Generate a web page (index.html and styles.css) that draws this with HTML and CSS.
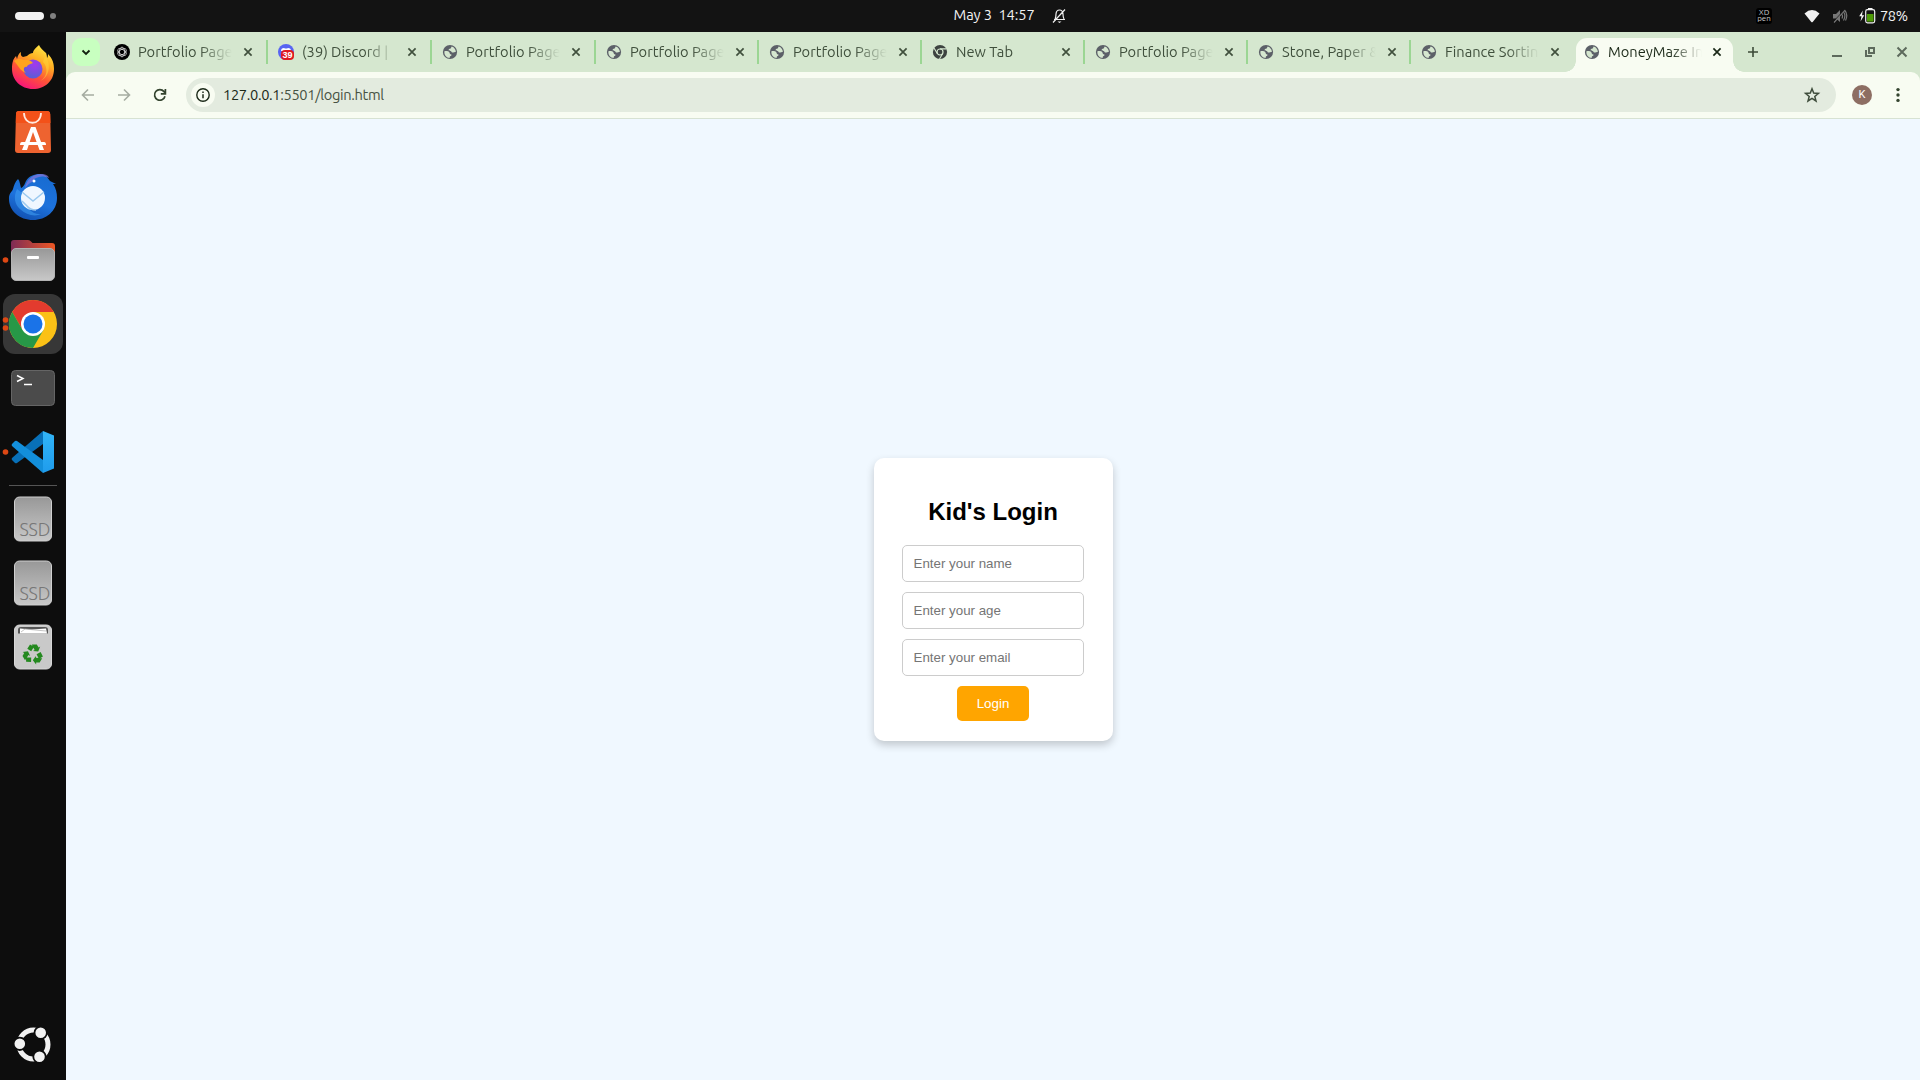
FILE: index.html
```html
<!DOCTYPE html>
<html lang="en">
<head>
<meta charset="utf-8">
<title>MoneyMaze</title>
<link rel="stylesheet" href="styles.css">
</head>
<body>
<svg width="0" height="0" class="defs">
  <defs>
    <linearGradient id="grey" x1="0" y1="0" x2="0" y2="1"><stop offset="0" stop-color="#989898"/><stop offset="1" stop-color="#c8c8c8"/></linearGradient>
    <linearGradient id="fox" x1=".8" y1="0" x2=".3" y2="1"><stop offset="0" stop-color="#fff04a"/><stop offset=".35" stop-color="#ffae22"/><stop offset=".65" stop-color="#ff5536"/><stop offset="1" stop-color="#f5127d"/></linearGradient>
    <radialGradient id="foxglobe" cx=".6" cy=".25" r=".8"><stop offset="0" stop-color="#a338ee"/><stop offset="1" stop-color="#5461d4"/></radialGradient>
    <linearGradient id="bird" x1=".8" y1="0" x2=".4" y2="1"><stop offset="0" stop-color="#176bd0"/><stop offset=".6" stop-color="#1d72dc"/><stop offset="1" stop-color="#1354b5"/></linearGradient>
    <linearGradient id="folder"><stop offset="0" stop-color="#7e2b56"/><stop offset="1" stop-color="#ed5724"/></linearGradient>
    <linearGradient id="code" x1="0" y1="0" x2="0" y2="1"><stop offset="0" stop-color="#32b5f8"/><stop offset="1" stop-color="#1f9cec"/></linearGradient>
  </defs>
  <symbol id="globe" viewBox="0 0 16 16">
    <circle cx="8" cy="8" r="7.1" fill="#5c6068"/>
    <path d="M2.400 7.200C4.500 7 6.200 7 7.300 8.200c.9 1 .1 1.900 1.300 2.100 1.400.2 1.200 1.200.1 1.700-.9.4-1 1-1 1.900C4.300 13.800 2 11 2.400 7.200z" fill="#d5e7cf"/>
    <path d="M9.800 2.400C8.800 3 9.500 3.800 8.600 4.500 7.400 4.900 6.400 5.100 6.700 6.200c.4.9 1.800.2 2.400 1 .5.8 1 1.700 2.100 1.300 1-.4 1.600-.8 2.600-.5C14 5.400 12.200 3.200 9.800 2.400z" fill="#d5e7cf"/>
  </symbol>
  <symbol id="close" viewBox="0 0 16 16"><path d="M4.400 4.400l7.200 7.200M11.600 4.400l-7.200 7.200" stroke="currentColor" stroke-width="1.7" fill="none"/></symbol>
</svg>

<header class="topbar">
  <div class="workspaces"><span class="pill"></span><span class="dot"></span></div>
  <div class="clock">
    <span class="date">May 3&nbsp; 14:57</span>
    <svg width="16" height="16" viewBox="0 0 16 16" fill="none" stroke="#f0f0f0" stroke-width="1.2"><path d="M3 11.500h11M4 11c1-1.200.8-3 1-5 .2-2.500 1.500-4 3.500-4S11.800 3.500 12 6c.1 2 0 3.500 1 5M2 14.500L14 1.500"/><path d="M6.500 13.500h4l-2 1.600z" fill="#f0f0f0" stroke="none"/></svg>
  </div>
  <div class="status">
    <span class="pen"><span>XD</span><span>pen</span></span>
    <svg class="wifi" width="16" height="16" viewBox="0 0 16 16"><path d="M.5 5.400Q8-1.200 15.500 5.400L8.700 14Q8 14.700 7.300 14z" fill="#f2f2f2"/></svg>
    <svg class="mute" width="16" height="16" viewBox="0 0 16 16"><path d="M1 6h3l4-4v12L4 10.500H1z" fill="#777"/><path d="M10 6.500q1 1.500 0 4M12 4.500q2 3.500-.5 8M12.500 2q4 4.500 1 10.500M2 14.500L13 2" fill="none" stroke="#777" stroke-width="1.2"/><path d="M1 14L13 1" stroke="#131313" stroke-width=".7"/></svg>
    <svg class="battery" width="17" height="16" viewBox="0 0 17 16"><path d="M3.800 2.500L.2 8.300h2.300L1.500 13.500 5.200 7.300H3z" fill="#f2f2f2"/><rect x="6.700" y="1.700" width="9" height="13.200" rx="1.800" fill="none" stroke="#f2f2f2" stroke-width="1.200"/><path d="M9 0h4.500v1.500H9z" fill="#f2f2f2"/><path d="M8 6h6.500v7.600H8z" fill="#4e9a06"/></svg>
    <span class="percent">78%</span>
  </div>
</header>

<div class="desktop">
  <nav class="dock">
    <svg class="app" viewBox="0 0 66 64">
      <path d="M39 9c1 3 4 5 7 8 0 0 1 2 1 5 1-1 1-3 1-4 5 5 6 10 6 15 0 12-9 20-21 20S12 44 12 33c0-6 1-10 4-13l1 3c1-4 2-6 4-7-.5 3 0 4 2 5l4-1c2-2 4-3 6-3 0-3 3-5 6-8z" fill="url(#fox)"/>
      <path d="M45 20c7 8 4 22-5 25 8-4 8-14 3-19z" fill="#ffd13a" opacity=".55"/>
      <circle cx="33" cy="33" r="9.500" fill="url(#foxglobe)"/>
      <path d="M14 25c4-3 8-2 10-1 5-1 7 1 9 3-3 1-6 2-6 4-4-1-4 4-1 6-6-2-8-8-12-12z" fill="#ffa31d"/>
    </svg>
    <svg class="app" viewBox="0 0 66 64">
      <path d="M19 11h28q3 0 3.200 3L51 50q0 3-3 3H18q-3 0-3-3l1-36q0-3 3-3z" fill="#ee6330"/><path d="M16 14q0-3 3-3h28q3 0 3.200 3l.3 9H15.800z" fill="#f35119"/>
      <path d="M24 13c0 13 17 13 17 0" fill="none" stroke="#ffe9df" stroke-width="1.800"/>
      <path d="M31 27h4.500L44 50h-4.500L33 32l-6 18h-5z" fill="#fff"/><path d="M22 42h22q2 0 2 3H20q0-3 2-3z" fill="#fff"/>
    </svg>
    <svg class="app" viewBox="0 0 66 64">
      <path d="M9 33c1-5 3-5 4-8 1-4 2-7 5-10 2 2 2 6 3 9 3-1 4-5 5-7 3-5 8-7 14-7 5 0 7 3 10 7l6 3h-3c3 4 4 9 4 14 0 13-11 22-24 22S8 47 9 33z" fill="url(#bird)"/>
      <path d="M25 24c1-8 8-14 16-14 4 0 7 1 8 4-5-2-9-2-13 0-3 1-2 3-4 4-3 1-4 3-7 6z" fill="#8878dc" opacity=".7"/><path d="M17 25c-4 8-2 16 3 20 6 6 15 8 21 5-9 1-17-7-15-18z" fill="#3e9bf0" opacity=".6"/>
      <circle cx="33" cy="34" r="12" fill="#f0f7ff"/><path d="M22 28l11 9 11-9M22 37l5 5q3 4 9 4" fill="none" stroke="#9bc9ef" stroke-width="1.500"/><circle cx="34" cy="17" r="1.500" fill="#fff"/>
    </svg>
    <svg class="app" viewBox="0 0 66 64">
      <path d="M11 42V15q0-3 3-3h14q2 0 3 1.500l1.500 1.500H52q3 0 3 3v24z" fill="url(#folder)"/>
      <rect x="11.500" y="20.500" width="43" height="32" rx="4.500" fill="url(#grey)" stroke="#b3b3b3"/><rect x="27" y="28" width="12" height="3" rx="1" fill="#fff"/>
      <circle cx="5.500" cy="32" r="2.800" fill="#dd4814"/>
    </svg>
    <svg class="app" viewBox="0 0 66 64">
      <rect x="3" y="2" width="60" height="60" rx="12" fill="#373737"/>
      <circle cx="33" cy="32" r="24" fill="#fbc116"/>
      <path d="M12.200 20A24 24 0 0 1 53.800 20H33L22.600 38z" fill="#e33b2e"/>
      <path d="M12.200 20A24 24 0 0 0 33 56L43.400 38H22.600z" fill="#279847"/>
      <circle cx="33" cy="32" r="12" fill="#fff"/><circle cx="33" cy="32" r="9.500" fill="#1a73e8"/>
      <circle cx="5.500" cy="28" r="2.800" fill="#dd4814"/><circle cx="5.500" cy="36" r="2.800" fill="#dd4814"/>
    </svg>
    <svg class="app" viewBox="0 0 66 64">
      <rect x="11.500" y="14.500" width="43" height="35" rx="4" fill="#4b4b4b" stroke="#656565"/>
      <path d="M17 19.500l6 3-6 3M24 28.500h8" fill="none" stroke="#fff" stroke-width="1.500"/>
    </svg>
    <svg class="app" viewBox="0 0 66 64">
      <path d="M43 11v13L17 43q-1 .5-2 0l-3-3q-.8-1 0-2z" fill="#0870b8"/>
      <path d="M43 53V40L17 21q-1-.5-2 0l-3 3q-.8 1 0 2z" fill="#138fdb"/>
      <path d="M43 11l11 4.500v33L43 53z" fill="url(#code)"/>
      <circle cx="5.500" cy="32" r="2.800" fill="#dd4814"/>
    </svg>
    <hr class="rule">
    <svg class="app" viewBox="0 0 66 64"><rect x="14.500" y="10" width="37" height="44" rx="5" fill="url(#grey)" stroke="#d0d0d0"/><text x="19.500" y="48.500" class="ssd-text">SSD</text></svg>
    <svg class="app" viewBox="0 0 66 64"><rect x="14.500" y="10" width="37" height="44" rx="5" fill="url(#grey)" stroke="#d0d0d0"/><text x="19.500" y="48.500" class="ssd-text">SSD</text></svg>
    <svg class="app" viewBox="0 0 66 64">
      <rect x="14.500" y="10" width="37" height="44" rx="5" fill="#c9c9c9" stroke="#d8d8d8"/>
      <path d="M18 18.500V15q0-3 3-3h24q3 0 3 3v3.500z" fill="#555"/><path d="M20 18.500v-5l12 1 14-1 1 5z" fill="#fff"/><path d="M21 17l4-3 21 2" stroke="#aaa" fill="none" stroke-width=".7"/>
      <g fill="#24891f"><g id="arrow"><path d="M27.300 33.800L30 29.600l4 2.200-2.800 4.400zM31.800 29.400h5l1.800 3 1.600-.9-2 5-5.200-.5 1.600-1z"/></g><use href="#arrow" transform="rotate(120 33 39.300)"/><use href="#arrow" transform="rotate(240 33 39.300)"/></g>
    </svg>
    <svg class="app launcher" viewBox="0 0 66 64">
      <circle cx="33.500" cy="32.500" r="14.500" fill="none" stroke="#f2f2f2" stroke-width="5"/>
      <g fill="#f2f2f2" stroke="#0d0d0d" stroke-width="1.800"><circle cx="19.800" cy="31.800" r="6.200"/><circle cx="40.700" cy="20.800" r="6.200"/><circle cx="39.500" cy="44.700" r="6.200"/></g>
    </svg>
  </nav>

  <main class="browser">
    <div class="tabstrip">
      <button class="tab-search"><svg width="16" height="16" viewBox="0 0 16 16"><path d="M4.500 6.500L8 10l3.500-3.500" fill="none" stroke="#111f0f" stroke-width="1.800"/></svg></button>
      <div class="tab first"><svg class="fav" viewBox="0 0 16 16"><circle cx="8" cy="8" r="8" fill="#000"/><g fill="none" stroke="#ddd" stroke-width=".8"><ellipse cx="8" cy="8" rx="2.500" ry="4.800"/><ellipse cx="8" cy="8" rx="2.500" ry="4.800" transform="rotate(60 8 8)"/><ellipse cx="8" cy="8" rx="2.500" ry="4.800" transform="rotate(120 8 8)"/></g></svg><span class="label">Portfolio Page</span><svg class="x"><use href="#close"/></svg></div>
      <div class="tab wide"><svg class="fav" viewBox="0 0 16 16"><circle cx="8" cy="8" r="8" fill="#5865f2"/><path d="M3 7q0-3 3-3l1 .6h2L10 4q3 0 3 3z" fill="#fff"/><rect x="3" y="6" width="13" height="10" rx="4" fill="#df1820"/><text x="9.500" y="14" class="badge">39</text></svg><span class="label">(39) Discord |</span><svg class="x"><use href="#close"/></svg></div>
      <div class="tab wide"><svg class="fav"><use href="#globe"/></svg><span class="label">Portfolio Page</span><svg class="x"><use href="#close"/></svg></div>
      <div class="tab"><svg class="fav"><use href="#globe"/></svg><span class="label">Portfolio Page</span><svg class="x"><use href="#close"/></svg></div>
      <div class="tab"><svg class="fav"><use href="#globe"/></svg><span class="label">Portfolio Page</span><svg class="x"><use href="#close"/></svg></div>
      <div class="tab"><svg class="fav" viewBox="0 0 16 16"><circle cx="8" cy="8" r="7.100" fill="#3d4340"/><circle cx="8" cy="8" r="3" fill="none" stroke="#d5e7cf" stroke-width="1.200"/><path d="M8 4.900h6.500M5.300 9.500L2 4M10.700 9.500L7.500 15" stroke="#d5e7cf" stroke-width="1.100"/></svg><span class="label">New Tab</span><svg class="x"><use href="#close"/></svg></div>
      <div class="tab"><svg class="fav"><use href="#globe"/></svg><span class="label">Portfolio Page</span><svg class="x"><use href="#close"/></svg></div>
      <div class="tab"><svg class="fav"><use href="#globe"/></svg><span class="label">Stone, Paper &amp;</span><svg class="x"><use href="#close"/></svg></div>
      <div class="tab last"><svg class="fav"><use href="#globe"/></svg><span class="label">Finance Sortin</span><svg class="x"><use href="#close"/></svg></div>
      <div class="tab active"><svg class="fav"><use href="#globe"/></svg><span class="label">MoneyMaze In</span><svg class="x"><use href="#close"/></svg></div>
      <svg class="new-tab" width="16" height="16" viewBox="0 0 16 16"><path d="M8 3v10M3 8h10" stroke="#3c4b39" stroke-width="1.600"/></svg>
      <div class="window-buttons">
        <svg width="16" height="16" viewBox="0 0 16 16"><path d="M3 12h10" stroke="#5d6a5c" stroke-width="2"/></svg>
        <svg width="16" height="16" viewBox="0 0 16 16"><path d="M7 4h5v5H7zM4 6v6h6" fill="none" stroke="#5d6a5c" stroke-width="2"/></svg>
        <svg width="16" height="16" viewBox="0 0 16 16"><path d="M3.500 3.500l9 9M12.500 3.500l-9 9" stroke="#5d6a5c" stroke-width="2"/></svg>
      </div>
    </div>
    <div class="toolbar">
      <div class="nav-buttons">
        <svg width="16" height="16" viewBox="0 0 16 16" fill="none" stroke="#a5aca1" stroke-width="1.600"><path d="M14 8H3M8 2.500L2.500 8 8 13.500"/></svg>
        <svg width="16" height="16" viewBox="0 0 16 16" fill="none" stroke="#a5aca1" stroke-width="1.600"><path d="M2 8h11M8 2.500L13.500 8 8 13.500"/></svg>
        <svg width="16" height="16" viewBox="0 0 16 16" fill="none" stroke="#34442f" stroke-width="1.700"><path d="M13 9.200A5.300 5.300 0 1 1 12 4.600L13 6M13.400 2v4.800H8.800"/></svg>
      </div>
      <div class="omnibox">
        <span class="info"><svg width="16" height="16" viewBox="0 0 16 16"><circle cx="8" cy="8" r="6.200" fill="none" stroke="#1b2918" stroke-width="1.400"/><path d="M8 7.200v4M8 4.600v1.500" stroke="#1b2918" stroke-width="1.500"/></svg></span>
        <span class="url"><b>127.0.0.1</b>:5501/login.html</span>
        <svg class="star" width="18" height="18" viewBox="0 0 18 18"><path d="M9 2.800l1.700 4.300 4.700.3-3.600 3 1.200 4.600L9 12.400 5 15l1.200-4.600-3.600-3 4.700-.3z" fill="none" stroke="#3f4d3c" stroke-width="1.500"/></svg>
      </div>
      <span class="avatar">K</span>
      <svg class="menu" width="16" height="16" viewBox="0 0 16 16" fill="#34442f"><circle cx="8" cy="2.600" r="1.700"/><circle cx="8" cy="8" r="1.700"/><circle cx="8" cy="13.400" r="1.700"/></svg>
    </div>
    <section class="page">
      <form class="card">
        <h2>Kid's Login</h2>
        <input type="text" placeholder="Enter your name">
        <input type="text" placeholder="Enter your age">
        <input type="text" placeholder="Enter your email">
        <button type="button" class="login">Login</button>
      </form>
    </section>
  </main>
</div>
</body>
</html>
```
FILE: styles.css
```css
* { box-sizing: border-box; }
body {
  margin: 0;
  width: 1920px;
  height: 1080px;
  display: flex;
  flex-direction: column;
  overflow: hidden;
  background: #0d0d0d;
  font-family: Ubuntu, "Noto Sans", sans-serif;
  font-size: 14px;
}
svg { display: block; flex: none; }
.defs { position: absolute; }

.topbar {
  height: 32px;
  flex: none;
  display: grid;
  grid-template-columns: 1fr auto 1fr;
  align-items: center;
  background: #131313;
  color: #f2f2f2;
}
.workspaces { display: flex; align-items: center; gap: 6px; padding-left: 15px; }
.pill { width: 29px; height: 8px; border-radius: 4px; background: #f2f2f2; }
.dot { width: 6px; height: 6px; border-radius: 50%; background: #808080; }
.clock { display: flex; align-items: center; gap: 17px; width: 113px; margin-left: 100px; }
.date { width: 80px; flex: none; white-space: nowrap; font-size: 14.667px; letter-spacing: -0.1px; padding-bottom: 4px; }
.status { display: flex; align-items: center; justify-content: flex-end; padding-right: 12px; }
.pen {
  width: 16px; height: 16px; border-radius: 3px; background: #000; color: #ccc;
  display: flex; flex-direction: column; align-items: center; justify-content: center;
  font-size: 8px; line-height: 6px; margin-right: 32px;
}
.wifi { margin-right: 12px; }
.mute { margin-right: 11px; }
.battery { margin-right: 4px; }
.percent { width: 28px; font-size: 14.667px; letter-spacing: -0.4px; white-space: nowrap; padding-bottom: 2px; }

.desktop { flex: 1; display: flex; min-height: 0; }
.dock { width: 66px; flex: none; display: flex; flex-direction: column; padding-top: 4px; background: #0d0d0d; }
.app { width: 66px; height: 64px; }
.rule { width: 48px; height: 1px; flex: none; margin: 1px 9px; border: 0; background: #555; }
.launcher { margin-top: auto; margin-bottom: 4px; }
.ssd-text { font-size: 18px; font-weight: 300; fill: #777; letter-spacing: -0.2px; }

.browser { flex: 1; display: flex; flex-direction: column; min-width: 0; background: #d5e7cf; }
.tabstrip { height: 40px; flex: none; display: flex; padding-left: 6px; align-items: center; }
.tab-search {
  width: 28px; height: 28px; border: 0; border-radius: 9px; padding: 0; background: #c8ffc0;
  display: flex; align-items: center; justify-content: center; margin-right: 5px;
}
.tab { width: 163px; height: 24px; flex: none; display: flex; align-items: center; padding-left: 10px; border-right: 2px solid #9bd693; color: #40503d; }
.tab.first { padding-left: 9px; }
.tab.wide { width: 164px; }
.tab.last { border-color: transparent; width: 165px; }
.fav { width: 16px; height: 16px; margin-right: 8px; }
.badge { font: bold 9px "Liberation Sans", sans-serif; fill: #fff; text-anchor: middle; }
.label {
  width: 94px; overflow: hidden; white-space: nowrap; font-size: 14.667px; padding-bottom: 2px;
  -webkit-mask-image: linear-gradient(90deg, #000 66%, transparent);
  mask-image: linear-gradient(90deg, #000 66%, transparent);
}
.x { width: 16px; height: 16px; margin-left: 8px; }
.tab.active {
  width: 157px; height: 34px; margin-top: 6px; border: 0; border-radius: 11px 11px 0 0; background: #f8fcf2;
  color: #1b2918; position: relative; padding: 0 0 6px 8px;
}
.tab.active .x { margin-left: 7px; }
.tab.active::before, .tab.active::after {
  content: ""; position: absolute; bottom: 0; width: 11px; height: 11px;
}
.tab.active::before { left: -11px; background: radial-gradient(circle at 0 0, transparent 10.500px, #f8fcf2 11px); }
.tab.active::after { right: -11px; background: radial-gradient(circle at 100% 0, transparent 10.500px, #f8fcf2 11px); }
.new-tab { margin-left: 12px; }
.window-buttons { margin-left: auto; display: flex; gap: 16.500px; padding-right: 10px; }

.toolbar {
  height: 47px; flex: none; display: flex; align-items: center; padding-left: 14px;
  background: #f8fcf2; border-bottom: 1px solid #d7e2d3; border-radius: 9px 9px 0 0;
}
.nav-buttons { display: flex; gap: 20px; width: 106px; }
.omnibox { width: 1650px; height: 34px; border-radius: 17px; background: #e3ebdf; display: flex; align-items: center; padding: 0 15px 0 5px; }
.info { width: 24px; height: 24px; border-radius: 50%; background: #f8fcf2; display: flex; align-items: center; justify-content: center; margin-right: 8px; }
.url { color: #465243; white-space: nowrap; font-size: 14.667px; letter-spacing: -0.35px; padding-bottom: 2px; }
.url b { font-weight: 400; color: #1b2918; }
.star { margin-left: auto; }
.avatar {
  width: 20px; height: 20px; border-radius: 50%; margin-left: 16px; background: #8d6e63; color: #fff;
  font: 11px/20px Roboto, sans-serif; text-align: center;
}
.menu { margin-left: 18px; }

.page { flex: 1; display: flex; align-items: center; justify-content: center; background: #f0f8ff; font-family: "Liberation Sans", Arial, sans-serif; }
.card {
  width: 239px; height: 283px; padding: 20px 28px; border-radius: 10px; background: #fff;
  box-shadow: 0 4px 8px rgba(0, 0, 0, 0.2);
  display: flex; flex-direction: column; align-items: center;
}
.card h2 { margin: 20px 0; font-size: 24px; line-height: 27px; white-space: nowrap; }
.card input {
  width: 182px; height: 37px; flex: none; margin: 0 0 10px; padding: 10px 10px 10px 10.500px; border: 1px solid #ccc; border-radius: 5px;
  font: 13.333px "Liberation Sans", Arial, sans-serif; background: #fff;
}
.login {
  width: 72px; height: 35px; flex: none; padding: 0; border: 0; border-radius: 5px; background: #ffa500; color: #fff;
  font: 13.333px "Liberation Sans", Arial, sans-serif;
}
```
